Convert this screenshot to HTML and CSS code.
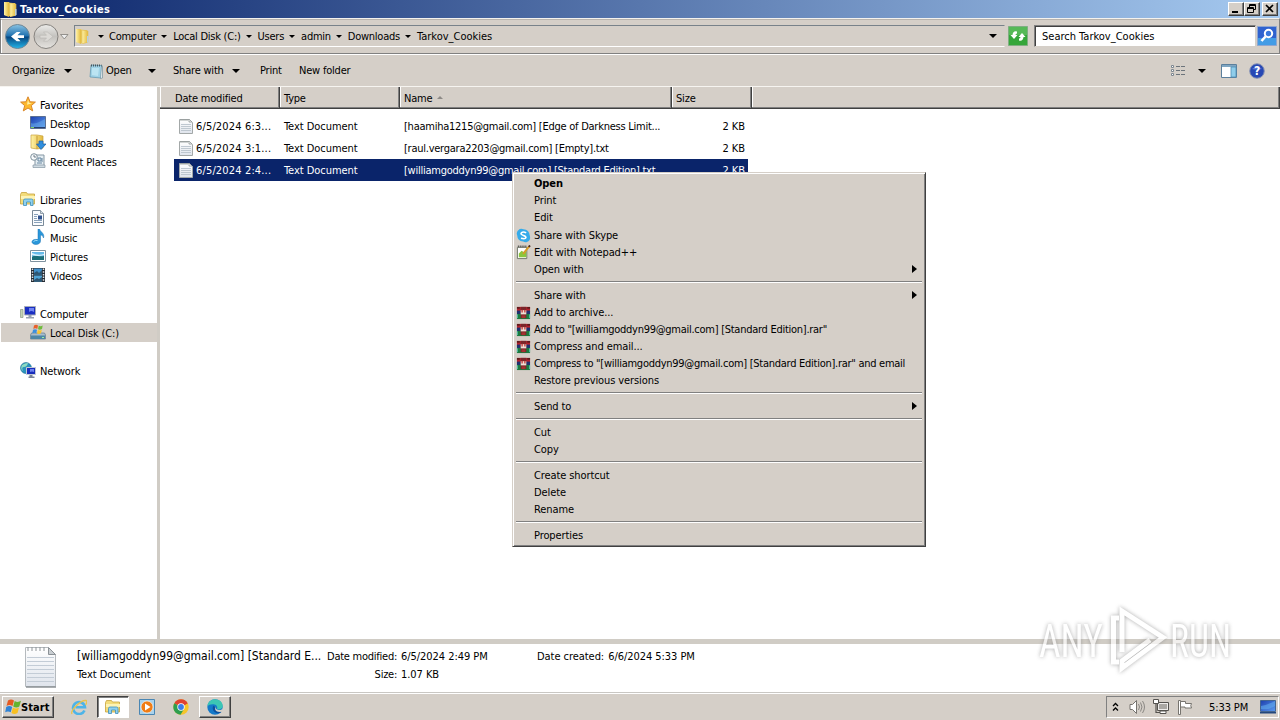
FILE: index.html
```html
<!DOCTYPE html>
<html lang="en">
<head>
    <meta charset="UTF-8">
    <meta name="viewport" content="width=device-width, initial-scale=1.0">
    <title>Tarkov_Cookies</title>
    <link rel="stylesheet" href="styles.css">
</head>
<body>
    <!-- Shared icons -->
    <svg class="sprite">
        <defs>
            <linearGradient id="gFolder"><stop offset="0" stop-color="#fff3a8"/><stop offset="1" stop-color="#e2b83c"/></linearGradient>
            <linearGradient id="gBack" x1="0" y1="0" x2="0" y2="1"><stop offset="0" stop-color="#8ac4e4"/><stop offset=".48" stop-color="#1d6fae"/><stop offset=".52" stop-color="#07457f"/><stop offset="1" stop-color="#22b6ea"/></linearGradient>
            <linearGradient id="gFwd" x1="0" y1="0" x2="0" y2="1"><stop offset="0" stop-color="#ececea"/><stop offset=".5" stop-color="#c4c2be"/><stop offset="1" stop-color="#e6e4e0"/></linearGradient>
            <linearGradient id="gScreen" x1="0" y1="0" x2="1" y2="1"><stop offset="0" stop-color="#1c3fae"/><stop offset="1" stop-color="#5b9cf0"/></linearGradient>
            <linearGradient id="gPage" x1="0" y1="0" x2="0" y2="1"><stop offset="0" stop-color="#ffffff"/><stop offset="1" stop-color="#dfe4ec"/></linearGradient>
        </defs>
        <symbol id="folder" viewBox="0 0 16 16">
            <path d="M2 1h5l1 1h5v13H7l-5-1z" fill="#e9c95a"/>
            <path d="M2 1l5 1v14l-5-2z" fill="url(#gFolder)"/>
            <path d="M8 2l6 1v11l-6 2z" fill="url(#gFolder)" stroke="#e0be55" stroke-width=".6"/>
            <path d="M13 8h1.500v6l-1.500.8z" fill="#b9cfe0"/>
        </symbol>
        <symbol id="txt" viewBox="0 0 16 16">
            <path d="M1.500 1.500h10l3 3v11h-13z" fill="url(#gPage)" stroke="#a3a8a8"/>
            <path d="M3 1v2M5 1v2M7 1v2M9 1v2M11 1v3h3" stroke="#8d9494" stroke-width=".8" fill="none"/>
            <path d="M3 6.500h10M3 8.500h10M3 10.500h10M3 12.500h10" stroke="#b9c3cc" stroke-width=".9"/>
        </symbol>
        <symbol id="notebook" viewBox="0 0 16 16">
            <path d="M3 2l11 .5-1 12.500-11-1z" fill="#9fd2e6" stroke="#5d93ae" stroke-width=".7"/>
            <path d="M13.500 3l1 .5v11.500l-2 .5z" fill="#eef3f5" stroke="#76909c" stroke-width=".7"/>
            <path d="M3 2.500h10.500" stroke="#47555c" stroke-width="2" stroke-dasharray="1 1"/>
            <path d="M4 5l7 0-1 8-6-1z" fill="#c7ebf6" opacity=".7"/>
        </symbol>
        <symbol id="star" viewBox="0 0 16 16">
            <path d="M8 .8l2.100 5 5.300.3-4.100 3.500 1.400 5.300L8 12l-4.700 2.900 1.400-5.300L.6 6.100l5.300-.3z" fill="#fdb92d" stroke="#d9862b"/>
            <path d="M8 3.500l1 3.300 3 .4-5 1.500z" fill="#fff1a6"/>
        </symbol>
        <symbol id="desktop" viewBox="0 0 16 16">
            <path d="M.5 1.500h15v12h-15z" fill="url(#gScreen)" stroke="#5b6f93"/>
            <path d="M1 8c5 2 9-2 14-4v8H1z" fill="#6fb3ee" opacity=".45"/>
            <path d="M1 12.500h14" stroke="#27406f"/>
            <path d="M1 12h3v1H1z" fill="#7fd36b"/>
        </symbol>
        <symbol id="downloads" viewBox="0 0 16 16">
            <path d="M1 1h6l6 1v12l-6 1-6-1z" fill="url(#gFolder)" stroke="#c9a23c" stroke-width=".7"/>
            <path d="M7 2v13" stroke="#c59b38"/>
            <path d="M9 7h4v3h3l-5 5.500L6.500 10H9z" fill="#2f8ede" stroke="#1b5fa6" stroke-width=".7"/>
        </symbol>
        <symbol id="recent" viewBox="0 0 16 16">
            <path d="M5 2h9v11H5z" fill="#e4edf2" stroke="#8597a3"/>
            <path d="M3 12h12v2.500H3z" fill="#cfdbe2" stroke="#8597a3" stroke-width=".7"/>
            <circle cx="4" cy="4" r="3.300" fill="#f8fbfd" stroke="#7f919d"/>
            <path d="M4 2v2h2" stroke="#4c5d69" fill="none" stroke-width=".8"/>
            <path d="M8 5h3v3H8zM7 10h5M12 5v4" stroke="#6686a0" fill="none"/>
        </symbol>
        <symbol id="libraries" viewBox="0 0 16 16">
            <path d="M.5 3.500l1-2h5l1 1.500h7v10H.5z" fill="#f3dc7a" stroke="#c6a23e" stroke-width=".8"/>
            <path d="M1 5h14v3H1z" fill="#fdf3b5"/>
            <path d="M3.500 14.500v-5q0-1.500 1.500-1.500h6.500q1.500 0 1.500 1.500v5h-2.500V11h-4v3.500z" fill="#8fd0ef" stroke="#3d8fbd" stroke-width=".8"/>
        </symbol>
        <symbol id="documents" viewBox="0 0 16 16">
            <path d="M2.500.5h8l3 3v12h-11z" fill="#fafcfe" stroke="#7b8b99"/>
            <path d="M10.500.5v3h3" fill="#d6dfe6" stroke="#7b8b99" stroke-width=".8"/>
            <path d="M4 4.500h4M4 6.500h3M4 8.500h3M4 10.500h8M4 12.500h8" stroke="#89a1ba"/>
            <path d="M8 5.500h4v4H8z" fill="#31538f"/>
        </symbol>
        <symbol id="music" viewBox="0 0 16 16">
            <path d="M8 0h1.500c.5 3 5.500 4 4 9-.5-2-1.500-3-3-3v6c0 2-2 3.500-4.500 3.500S1.500 14 2 12.500 4.500 10 8 10.500z" fill="#2a97da" stroke="#1873b4" stroke-width=".5"/>
            <path d="M3.500 12.500q1.500-1.500 4-1" stroke="#9bdcf8" fill="none"/>
        </symbol>
        <symbol id="pictures" viewBox="0 0 16 16">
            <path d="M.5 2.500h15v11h-15z" fill="#fff" stroke="#7f929f"/>
            <path d="M2 4h12v8H2z" fill="#65b9e8"/>
            <path d="M2 9c3-3 5 0 12-1v4H2z" fill="#1b6e78"/>
            <path d="M2 5q6 3 12 1v1q-6 2-12 0z" fill="#d9f0fb"/>
        </symbol>
        <symbol id="videos" viewBox="0 0 16 16">
            <path d="M1 1h14v14H1z" fill="#252b33"/>
            <path d="M4 1.500h8v6H4z" fill="#3f8fca"/><path d="M4 8.500h8v6H4z" fill="#4fa3d5"/>
            <path d="M4 6l3-2 2 2 3-3v4.500H4zM4 13l3-2 2 1 3-2v4.500H4z" fill="#2d5673"/>
            <path d="M2.500 1.500v13M13.500 1.500v13" stroke="#dfe5e9" stroke-width="1.500" stroke-dasharray="1.500 1.200"/>
        </symbol>
        <symbol id="computer" viewBox="0 0 16 16">
            <path d="M.5 4.500h2.500v8H.5z" fill="#c3d4b4" stroke="#8c9a86" stroke-width=".7"/>
            <path d="M4.500 1.500h11v8.500h-11z" fill="#1a2fc2" stroke="#a7adb9"/>
            <path d="M9 3h5v4q-3-2-5 0z" fill="#7084f2"/>
            <path d="M8.500 10h3v2h2.500v1.500H6V12h2.500z" fill="#98a2b2"/>
        </symbol>
        <symbol id="drive" viewBox="0 0 16 16">
            <path d="M1.500 9h13l1 2v4H.5v-4z" fill="#a9bccb" stroke="#62798a" stroke-width=".7"/>
            <path d="M1 11.500h14V15H1z" fill="#4d86a6"/>
            <path d="M12 13h2v1h-2z" fill="#9bf0a1"/>
            <path d="M4 1.500q2-1.500 4 0L7.300 5q-2-1.300-4 0z" fill="#e8602c"/>
            <path d="M8.700 1.800q2 1 4-.2L12 5q-2 1.200-4 .2z" fill="#6fbb3b"/>
            <path d="M3 5.800q2-1.300 4 0L6.300 9.300q-2-1.300-4 0z" fill="#3b8fdd"/>
            <path d="M7.800 6q2 1 4-.2L11 9.300q-2 1.200-4 .2z" fill="#f8c42e"/>
        </symbol>
        <symbol id="network" viewBox="0 0 16 16">
            <circle cx="6" cy="6" r="5.500" fill="#2b93bd" stroke="#1c6f91" stroke-width=".6"/>
            <path d="M2 3q3-2 6-2-1 4-4 4t-1 4Q0 7 2 3z" fill="#8fdcc0"/>
            <path d="M6.500 5.500h9v7h-9z" fill="#182dbb" stroke="#c3c9d5"/>
            <path d="M10 7h4v3q-2-1-4 0z" fill="#6d82f0"/>
            <path d="M9.500 13h3v1.500h2V16h-6v-1.500h1z" fill="#7c8698"/>
        </symbol>
        <symbol id="rar" viewBox="0 0 16 16">
            <path d="M1 2h14v5H1z" fill="#b5202c"/>
            <path d="M1 6h14v4H1z" fill="#20306f"/>
            <path d="M1 9.500h14V15H1z" fill="#1c7a3e"/>
            <path d="M1 2h3v2H1zM12 2h3v2h-3z" fill="#5d1b1c"/>
            <path d="M5 2h6v12H5z" fill="#79262a"/>
            <path d="M5 5.500h6V10H5z" fill="#efe0d4"/>
            <path d="M6.500 5v3M9.500 5v3" stroke="#c32a2d" stroke-width="1.300"/>
            <path d="M1.500 10v4M14.500 10v4" stroke="#59c3ae"/>
            <path d="M6 11h4v3H6z" fill="#a53131"/>
        </symbol>
        <symbol id="flag" viewBox="0 0 16 16">
            <path d="M3 1.500q3-2 6 0L7.500 7q-3-2-6 0z" fill="#e55a22"/>
            <path d="M9.700 2q3 2 6.300-.2L14.300 7.500q-3 2-6.100 0z" fill="#65b32e"/>
            <path d="M1.200 8q3-2 6 0L5.700 13.300q-2.700-1.700-5.500 0z" fill="#2f83d6"/>
            <path d="M7.900 8.500q3 2 6.100 0L12.500 14q-3 2-6.100 0z" fill="#f8c022"/>
        </symbol>
    </svg>

    <div class="titlebar">
        <svg class="icon"><use href="#folder"/></svg>
        <span class="title">Tarkov_Cookies</span>
        <div class="winbtns">
            <div class="winbtn"><svg viewBox="0 0 14 12"><path d="M3 8h6v2H3z"/></svg></div>
            <div class="winbtn"><svg viewBox="0 0 14 12"><path d="M4.500 1.500h6v5h-6zM4 2.500h7" fill="none" stroke="#000"/><path d="M2.500 4.500h6v5h-6z" fill="#d5cfc8" stroke="#000"/><path d="M2 5.500h7" stroke="#000"/></svg></div>
            <div class="winbtn close"><svg viewBox="0 0 14 12"><path d="M3 2l7 7M10 2l-7 7" stroke="#000" stroke-width="1.700"/></svg></div>
        </div>
    </div>

    <div class="navbar">
        <svg class="navbtns" viewBox="0 0 70 30">
            <circle cx="16.500" cy="15.500" r="12" fill="url(#gBack)" stroke="#6f8796"/>
            <path d="M23 14.200h-6.500l3-3.200h-3.800L10 15.500l5.700 4.700h3.800l-3-3.200H23z" fill="#fff"/>
            <circle cx="45" cy="15.500" r="12" fill="url(#gFwd)" stroke="#85827e"/>
            <path d="M39 14.200h6.500l-3-3.200h3.800L52 15.500l-5.700 4.700h-3.800l3-3.200H39z" fill="#dcdad6" stroke="#b9b7b3" stroke-width=".6"/>
            <path d="M59.500 13.500h7.500l-3.700 4.500z" fill="#eee" stroke="#807d79" stroke-width=".8"/>
        </svg>
        <div class="address">
            <svg class="icon"><use href="#folder"/></svg>
            <i class="down small first"></i><span>Computer</span>
            <i class="down small"></i><span>Local Disk (C:)</span>
            <i class="down small"></i><span>Users</span>
            <i class="down small"></i><span>admin</span>
            <i class="down small"></i><span>Downloads</span>
            <i class="down small"></i><span class="current">Tarkov_Cookies</span>
            <i class="down history"></i>
        </div>
        <svg class="refresh" viewBox="0 0 20 20">
            <path d="M.5.5h19v19H.5z" fill="#35a63a" stroke="#7fae82"/>
            <path d="M1 1h18v8H1z" fill="#6cc66a" opacity=".6"/>
            <path d="M9 5.500q-4-1-4.500 3.500H2.500L6 13l3.500-4H7.500q0-1.500 1.500-1.500zM11 14.500q4 1 4.500-3.500h2L14 7l-3.500 4h2q0 1.500-1.500 1.500z" fill="#fff"/>
        </svg>
        <div class="search">Search Tarkov_Cookies</div>
        <svg class="searchbtn" viewBox="0 0 20 20">
            <path d="M.5.5h19v19H.5z" fill="#2f62cf" stroke="#8fa6cf"/>
            <path d="M1 12h18v7H1z" fill="#4bb5ee" opacity=".7"/>
            <circle cx="11.500" cy="7.500" r="3.700" fill="#3a78dc" stroke="#fff" stroke-width="2"/>
            <path d="M8.500 10.500L4.500 15" stroke="#fff" stroke-width="2.600"/>
        </svg>
    </div>

    <div class="toolbar">
        <span class="tool organize">Organize <i class="down"></i></span>
        <span class="tool open"><svg class="icon"><use href="#notebook"/></svg>Open <i class="down"></i></span>
        <span class="tool share">Share with <i class="down"></i></span>
        <span class="tool print">Print</span>
        <span class="tool">New folder</span>
        <div class="viewtools">
            <svg class="icon" viewBox="0 0 16 16"><path d="M1.500 2.500h2v2h-2zM1.500 6.500h2v2h-2zM1.500 10.500h2v2h-2z" fill="#fff" stroke="#7d8790"/><path d="M6 3.500h4M11 3.500h4M6 7.500h4M11 7.500h4M6 11.500h4M11 11.500h4" stroke="#6c747b"/></svg>
            <i class="down"></i>
            <svg class="icon pane" viewBox="0 0 16 16"><path d="M.5 1.500h15v13H.5z" fill="#fff" stroke="#5b7f9c"/><path d="M1 2h14v2H1z" fill="#7fa6c2"/><path d="M10 4h5v10h-5z" fill="#8fcdea" stroke="#4f8db4" stroke-width=".8"/></svg>
            <svg class="icon help" viewBox="0 0 16 16"><circle cx="8" cy="8" r="7.300" fill="#2748b4" stroke="#8994b5"/><path d="M3 6q5-5 10 0-5 1-10 0z" fill="#6f8ce6" opacity=".7"/><text x="8" y="12.300" text-anchor="middle" class="qmark">?</text></svg>
        </div>
    </div>

    <div class="main">
        <div class="sidebar">
            <div class="nav root"><svg class="icon"><use href="#star"/></svg>Favorites</div>
            <div class="nav"><svg class="icon"><use href="#desktop"/></svg>Desktop</div>
            <div class="nav"><svg class="icon"><use href="#downloads"/></svg>Downloads</div>
            <div class="nav"><svg class="icon"><use href="#recent"/></svg>Recent Places</div>
            <div class="nav root"><svg class="icon"><use href="#libraries"/></svg>Libraries</div>
            <div class="nav"><svg class="icon"><use href="#documents"/></svg>Documents</div>
            <div class="nav"><svg class="icon"><use href="#music"/></svg>Music</div>
            <div class="nav"><svg class="icon"><use href="#pictures"/></svg>Pictures</div>
            <div class="nav"><svg class="icon"><use href="#videos"/></svg>Videos</div>
            <div class="nav root"><svg class="icon"><use href="#computer"/></svg>Computer</div>
            <div class="nav selected"><svg class="icon"><use href="#drive"/></svg>Local Disk (C:)</div>
            <div class="nav root"><svg class="icon"><use href="#network"/></svg>Network</div>
        </div>
        <div class="files">
            <div class="columns">
                <div class="col first">Date modified</div>
                <div class="col">Type</div>
                <div class="col">Name <i class="sort"></i></div>
                <div class="col">Size</div>
                <div class="col"></div>
            </div>
            <div class="rows">
                <div class="row"><svg class="icon"><use href="#txt"/></svg><span class="date">6/5/2024 6:3...</span><span>Text Document</span><span class="file">[haamiha1215@gmail.com] [Edge of Darkness Limit...</span><span class="size">2 KB</span></div>
                <div class="row"><svg class="icon"><use href="#txt"/></svg><span class="date">6/5/2024 3:1...</span><span>Text Document</span><span class="file">[raul.vergara2203@gmail.com] [Empty].txt</span><span class="size">2 KB</span></div>
                <div class="row selected"><svg class="icon"><use href="#txt"/></svg><span class="date">6/5/2024 2:4...</span><span>Text Document</span><span class="file">[williamgoddyn99@gmail.com] [Standard Edition].txt</span><span class="size">2 KB</span></div>
            </div>
        </div>
    </div>

    <div class="details">
        <svg class="bigicon" viewBox="0 0 32 42">
            <path d="M.5 1.500h23l7 7v32H.5z" fill="url(#gPage)" stroke="#b5babe"/>
            <path d="M23.500 1.500v7h7z" fill="#c9ced2" stroke="#8b9196"/>
            <path d="M3 1v4M7 1v4M11 1v4M15 1v4M19 1v4" stroke="#8f9599"/>
            <path d="M2 11.500h27M2 15.500h27M2 19.500h27M2 23.500h27M2 27.500h27M2 31.500h27M2 35.500h27" stroke="#c3ccd6"/>
            <path d="M1 41h30" stroke="#8d9296" stroke-width="1.500"/>
        </svg>
        <div class="name"><div class="filename">[williamgoddyn99@gmail.com] [Standard E...</div><div>Text Document</div></div>
        <div class="props">
            <span class="label">Date modified:</span><span>6/5/2024 2:49 PM</span>
            <span class="label">Size:</span><span>1.07 KB</span>
        </div>
        <div class="created"><span>Date created:</span><span>6/6/2024 5:33 PM</span></div>
    </div>

    <div class="taskbar">
        <div class="start"><svg class="icon"><use href="#flag"/></svg>Start</div>
        <div class="task"><svg class="icon" viewBox="0 0 16 16"><path d="M13.500 11.500a6 6 0 1 1 .5-3.200H4.500" fill="none" stroke="#4db4e8" stroke-width="2.600"/><path d="M1 15C-1 12 9 1 15 1.500c1.500.3.500 3-.5 4.500" fill="none" stroke="#e9c34c" stroke-width="1.300"/></svg></div>
        <div class="task pressed"><svg class="icon"><use href="#libraries"/></svg></div>
        <div class="task"><svg class="icon" viewBox="0 0 16 16"><path d="M.5.500h15v15H.5z" fill="#a9d2ec" stroke="#4a86b3"/><circle cx="8" cy="8" r="6" fill="#f07c15" stroke="#fff" stroke-width=".6"/><path d="M6 4.500v7L11.500 8z" fill="#fff"/></svg></div>
        <div class="task"><svg class="icon" viewBox="0 0 16 16"><circle cx="8" cy="8" r="7.700" fill="#f5c52b"/><path d="M8 8L1.300 4.200A7.700 7.700 0 0 1 14.700 4.200z" fill="#df4232"/><path d="M1.300 4.200A7.700 7.700 0 0 0 7.500 15.700L11 10 8 8z" fill="#2e9e4f"/><path d="M8 4.200h6.700L8 8z" fill="#df4232"/><circle cx="8" cy="8" r="3.700" fill="#fff"/><circle cx="8" cy="8" r="2.900" fill="#3b7de8"/></svg></div>
        <div class="task raised"><svg class="icon" viewBox="0 0 16 16"><circle cx="8" cy="8" r="7.700" fill="#1479c9"/><path d="M.5 7C1 2.500 4.500.3 8 .3c5 0 8 3.700 7.700 7-.3 3-3.700 3.700-5.700 2.700 1-2-.5-4.500-3.500-4.800C3.500 5 1.500 6 .5 7z" fill="#3cc6b4"/><path d="M6.500 6.500c-2 3 0 7.500 4.500 7.700 2 0 3-.7 3.700-1.500-2 .6-6.500.3-6-4z" fill="#0c4f9e"/><path d="M8.700 7.500c-.7 3 3 4.200 5.500 3.200l1.500-1.200v3l-3 .4c-4 0-5.500-2.400-4-5.400z" fill="#d5cfc8"/></svg></div>
        <div class="tray">
            <svg class="chev" viewBox="0 0 7 10"><path d="M1 4l2.500-2.500L6 4M1 8.500L3.500 6 6 8.500" fill="none" stroke="#000" stroke-width="1.300"/></svg>
            <svg class="icon speaker" viewBox="0 0 16 16"><path d="M1 5.500h2.500l4-4v13l-4-4H1z" fill="#fff" stroke="#76736f"/><path d="M9.500 5q2 3 0 6M11.500 3.500q3 4.500 0 9M13.500 2q4 6 0 12" fill="none" stroke="#8a8783"/></svg>
            <svg class="icon net" viewBox="0 0 16 16"><path d="M4.500 3.500h11v8h-11z" fill="#eeecea" stroke="#55524f"/><path d="M6 5h8v5H6z" fill="#aaa7a3"/><path d="M.5.500h5v4h-5z" fill="#fff" stroke="#55524f"/><path d="M3 5v8.500h4" fill="none" stroke="#55524f" stroke-width="1.200"/><path d="M7 12h6v2.500H7z" fill="#fff" stroke="#55524f"/></svg>
            <svg class="icon action" viewBox="0 0 16 16"><path d="M1.500 1.500h2v14h-2z" fill="#fff" stroke="#77746f"/><path d="M3.500 2.500h5v2h6q-1.500 2 0 4.500h-6.500V8h-4.500z" fill="#fff" stroke="#77746f"/></svg>
            <span class="clock">5:33 PM</span>
            <svg class="icon" viewBox="0 0 16 16"><path d="M.5 1.500h15v11h-15z" fill="url(#gScreen)" stroke="#44658f"/><path d="M1 7q7-1 14-5v5q-6 4-14 3z" fill="#62acec" opacity=".6"/><path d="M0 13h16v1.500H0z" fill="#23477c"/></svg>
        </div>
    </div>

    <div class="menu">
        <div class="item default">Open</div>
        <div class="item">Print</div>
        <div class="item">Edit</div>
        <div class="item tall"><svg class="icon" viewBox="0 0 16 16"><path d="M4 1q2-.7 4 .3 6 .3 6.700 6.700 1.500 5-3 7-2 .7-4-.5Q1.500 14 1.300 8-.5 3.500 4 1z" fill="#35abea"/><path d="M10.800 5.300Q8 3.300 6 5t2 2.900q3 .9 2.500 2.600T5.300 11" fill="none" stroke="#fff" stroke-width="1.700"/></svg>Share with Skype</div>
        <div class="item"><svg class="icon" viewBox="0 0 16 16"><path d="M1.500 2.500h10v12h-10z" fill="#fff" stroke="#6c7263"/><path d="M2 1.500h9" stroke="#444" stroke-dasharray="1 1" stroke-width="2"/><path d="M3 9l3-3 3 2 2-2v7H3z" fill="#8bc63e"/><path d="M14 1.500L7.500 9.500" stroke="#d89b28" stroke-width="2"/><path d="M15 .5l-1.500 1.500" stroke="#4b2a20" stroke-width="2"/></svg>Edit with Notepad++</div>
        <div class="item more">Open with</div>
        <hr>
        <div class="item more">Share with</div>
        <div class="item"><svg class="icon"><use href="#rar"/></svg>Add to archive...</div>
        <div class="item long"><svg class="icon"><use href="#rar"/></svg>Add to "[williamgoddyn99@gmail.com] [Standard Edition].rar"</div>
        <div class="item"><svg class="icon"><use href="#rar"/></svg>Compress and email...</div>
        <div class="item long"><svg class="icon"><use href="#rar"/></svg>Compress to "[williamgoddyn99@gmail.com] [Standard Edition].rar" and email</div>
        <div class="item">Restore previous versions</div>
        <hr>
        <div class="item more">Send to</div>
        <hr>
        <div class="item">Cut</div>
        <div class="item">Copy</div>
        <hr>
        <div class="item">Create shortcut</div>
        <div class="item">Delete</div>
        <div class="item">Rename</div>
        <hr>
        <div class="item">Properties</div>
    </div>

    <svg class="watermark" viewBox="0 0 230 80">
        <text x="3" y="54" textLength="64" lengthAdjust="spacingAndGlyphs">ANY</text>
        <text x="134" y="54" textLength="61" lengthAdjust="spacingAndGlyphs">RUN</text>
        <path d="M83 15h-5.500v44H83" class="line"/>
        <path d="M86 49V8l41 26.500L86 65v-7l28-21" class="line"/>
    </svg>
</body>
</html>
```
FILE: styles.css
```css
* {
    box-sizing: border-box;
}

body {
    margin: 0;
    width: 1280px;
    height: 720px;
    overflow: hidden;
    display: flex;
    flex-direction: column;
    background: #fff;
    color: #000;
    font-family: "DejaVu Sans Condensed", "DejaVu Sans", Tahoma, sans-serif;
    font-stretch: condensed;
    font-size: 11px;
    letter-spacing: -0.2px;
    white-space: nowrap;
}

.sprite {
    position: absolute;
    width: 0;
    height: 0;
}

.icon {
    width: 16px;
    height: 16px;
    flex: none;
}

/* small black arrows */
.down {
    flex: none;
    display: inline-block;
    border: 4px solid transparent;
    border-top-color: #000;
    border-bottom: 0;
}

.down.small {
    border-width: 3px;
    border-bottom: 0;
}

/* title bar */
.titlebar {
    height: 18px;
    flex: none;
    display: flex;
    align-items: center;
    padding: 0 2px;
    background: linear-gradient(to right, #0a246a, #a6caf0);
}

.title {
    margin-left: 2px;
    color: #fff;
    font-weight: bold;
    letter-spacing: 0.4px;
}

.winbtns {
    margin-left: auto;
    display: flex;
}

.winbtn {
    width: 16px;
    height: 14px;
    background: #d5cfc8;
    border: 1px solid;
    border-color: #fff #404040 #404040 #fff;
    box-shadow: inset -1px -1px #808080;
}

.winbtn svg {
    display: block;
    width: 14px;
    height: 12px;
}

.close {
    margin-left: 2px;
}

/* navigation row */
.navbar {
    height: 36px;
    flex: none;
    display: flex;
    align-items: center;
    background: #d5cfc8;
    border: 1px solid #808080;
    border-top-color: #f4f2ee;
    box-shadow: inset 0 1px #b9b4ae, inset 1px 0 #fff;
}

.navbtns {
    width: 70px;
    height: 30px;
    flex: none;
}

.address {
    width: 931px;
    height: 22px;
    margin-left: 3px;
    display: flex;
    align-items: center;
    letter-spacing: -0.25px;
    border: 1px solid;
    border-color: #78828a #d5cfc8 #fff #78828a;
}

.address .icon {
    margin-left: -1px;
}

.down.small {
    margin: 0 6px 0 5px;
}

.down.small.first {
    margin-left: 8px;
    margin-right: 5px;
}

.current {
    letter-spacing: 0;
}

.history {
    margin-left: auto;
    margin-right: 7px;
}

.refresh,
.searchbtn {
    width: 20px;
    height: 20px;
    flex: none;
}

.refresh {
    margin-left: 3px;
}

.search {
    width: 222px;
    height: 22px;
    margin: 0 1px 0 6px;
    padding-left: 7px;
    line-height: 21px;
    letter-spacing: 0;
    background: #fff;
    border: 1px solid;
    border-color: #808080 #d5cfc8 #d5cfc8 #808080;
    box-shadow: inset 1px 1px #404040;
}

/* command bar */
.toolbar {
    height: 32px;
    flex: none;
    display: flex;
    align-items: center;
    padding: 0 15px 0 12px;
    background: #d5cfc8;
    border-top: 1px solid #fff;
}

.tool {
    display: flex;
    align-items: center;
}

.tool .down {
    margin-left: auto;
}

.tool .icon {
    margin-left: -1px;
    margin-right: 2px;
}

.organize {
    width: 60px;
    margin-right: 17px;
}

.open {
    width: 67px;
    margin-right: 17px;
}

.share {
    width: 67px;
    margin-right: 20px;
}

.print {
    width: 39px;
}

.viewtools {
    margin-left: auto;
    display: flex;
    align-items: center;
}

.viewtools .down {
    margin: 0 15px 0 12px;
}

.help {
    margin-left: 12px;
}

.qmark {
    fill: #fff;
    font-size: 12px;
    font-weight: bold;
}

/* folder tree and file list */
.main {
    height: 553px;
    flex: none;
    display: flex;
    border-top: 1px solid #f6f4f0;
}

.sidebar {
    width: 160px;
    flex: none;
    padding: 8px 0 0 1px;
    border-right: 3px solid #d0ccc5;
}

.nav {
    height: 19px;
    display: flex;
    align-items: center;
    gap: 4px;
    padding: 1px 0 0 29px;
    letter-spacing: -0.15px;
}

.nav .icon {
    margin-top: -2px;
}

.nav.root {
    margin-top: 19px;
    padding-left: 19px;
}

.nav.root:first-child {
    margin-top: 0;
}

.nav.selected {
    background: #d5cfc8;
}

.files {
    flex: 1;
}

.columns {
    height: 22px;
    display: grid;
    grid-template-columns: 120px 120px 272px 80px 1fr;
    background: #d5cfc8;
}

.col {
    padding: 5px 0 0 4px;
    border-right: 1px solid #404040;
    border-bottom: 1px solid #404040;
    box-shadow: inset -1px -1px #808080, inset 1px 0 #fff;
}

.col.first {
    padding-left: 15px;
}

.sort {
    display: inline-block;
    margin-left: 2px;
    border: 3px solid transparent;
    border-bottom-color: #8d8a86;
    border-top: 0;
    vertical-align: 3px;
}

.rows {
    padding: 6px 0 0 14px;
}

.row {
    width: 574px;
    height: 22px;
    display: grid;
    grid-template-columns: 18px 88px 120px 272px 69px;
    align-items: center;
    padding-left: 4px;
    letter-spacing: -0.05px;
}

.row .date {
    letter-spacing: 0.15px;
}

.row .file {
    letter-spacing: -0.25px;
}

.row .size {
    text-align: right;
}

.row.selected {
    background: #0a246a;
    color: #fff;
}

/* details pane */
.details {
    height: 54px;
    flex: none;
    display: flex;
    padding-top: 4px;
    border-top: 5px solid #d0ccc5;
    border-bottom: 1px solid #c9c7c3;
    line-height: 18px;
    letter-spacing: -0.05px;
}

.bigicon {
    width: 32px;
    height: 42px;
    margin: -2px 20px 0 25px;
}

.name {
    width: 250px;
}

.filename {
    font-size: 12px;
    line-height: 17px;
    margin-bottom: 1px;
    letter-spacing: -0.02px;
}

.props {
    width: 210px;
    display: grid;
    grid-template-columns: 70px 1fr;
    column-gap: 4px;
    align-content: start;
}

.label {
    text-align: right;
    letter-spacing: -0.25px;
}

.created {
    display: flex;
    gap: 4px;
}

/* taskbar */
.taskbar {
    height: 27px;
    flex: none;
    display: flex;
    align-items: center;
    padding: 1px 1px 1px 2px;
    background: #d5cfc8;
    border-top: 1px solid #fff;
}

.start {
    width: 52px;
    height: 22px;
    margin-right: 9px;
    display: flex;
    align-items: center;
    padding-left: 2px;
    font-size: 11px;
    font-weight: bold;
    letter-spacing: 0.1px;
    border: 1px solid;
    border-color: #fff #404040 #404040 #fff;
    box-shadow: inset -1px -1px #808080;
}

.task {
    width: 32px;
    height: 22px;
    margin-right: 2px;
    display: flex;
    align-items: center;
    justify-content: center;
    border: 1px solid transparent;
}

.pressed {
    background: #fff;
    border-color: #404040 #fff #fff #404040;
    box-shadow: inset 1px 1px #808080;
}

.raised {
    border-color: #fff #404040 #404040 #fff;
    box-shadow: inset -1px -1px #808080;
}

.tray {
    width: 173px;
    height: 22px;
    margin-left: auto;
    display: flex;
    align-items: center;
    padding-left: 5px;
    border: 1px solid;
    border-color: #808080 #fff #fff #808080;
}

.chev {
    width: 7px;
    height: 10px;
    margin-right: 10px;
}

.speaker,
.net {
    margin-right: 8px;
}

.action {
    margin-right: 16px;
}

.clock {
    width: 51px;
    letter-spacing: -0.1px;
}

/* context menu over the file list */
.menu {
    position: absolute;
    left: 512px;
    top: 172px;
    width: 414px;
    height: 375px;
    padding: 2px;
    background: #d5cfc8;
    border: 1px solid;
    border-color: #d5cfc8 #404040 #404040 #d5cfc8;
    box-shadow: inset 1px 1px #fff, inset -1px -1px #808080;
}

.item {
    height: 17px;
    display: flex;
    align-items: center;
    padding-left: 19px;
    letter-spacing: -0.1px;
}

.item.long {
    letter-spacing: -0.27px;
}

.item.tall {
    height: 18px;
}

.item .icon {
    width: 15px;
    height: 15px;
    margin: 0 3px 0 -18px;
}

.default {
    font-weight: bold;
}

.more::after {
    content: "";
    margin: -2px 6px 0 auto;
    border: 4px solid transparent;
    border-left: 5px solid #000;
    border-right: 0;
}

.menu hr {
    height: 2px;
    margin: 3px 1px 4px;
    border: 0;
    border-top: 1px solid #808080;
    border-bottom: 1px solid #fff;
}

/* translucent logo */
.watermark {
    position: absolute;
    left: 1036px;
    top: 603px;
    width: 230px;
    height: 80px;
    fill: #fff;
    font-family: Roboto, sans-serif;
    font-size: 46px;
    letter-spacing: 0;
    opacity: 0.7;
    filter: drop-shadow(0 0 2px #888);
}

.line {
    fill: none;
    stroke: #fff;
    stroke-width: 5;
}
```
